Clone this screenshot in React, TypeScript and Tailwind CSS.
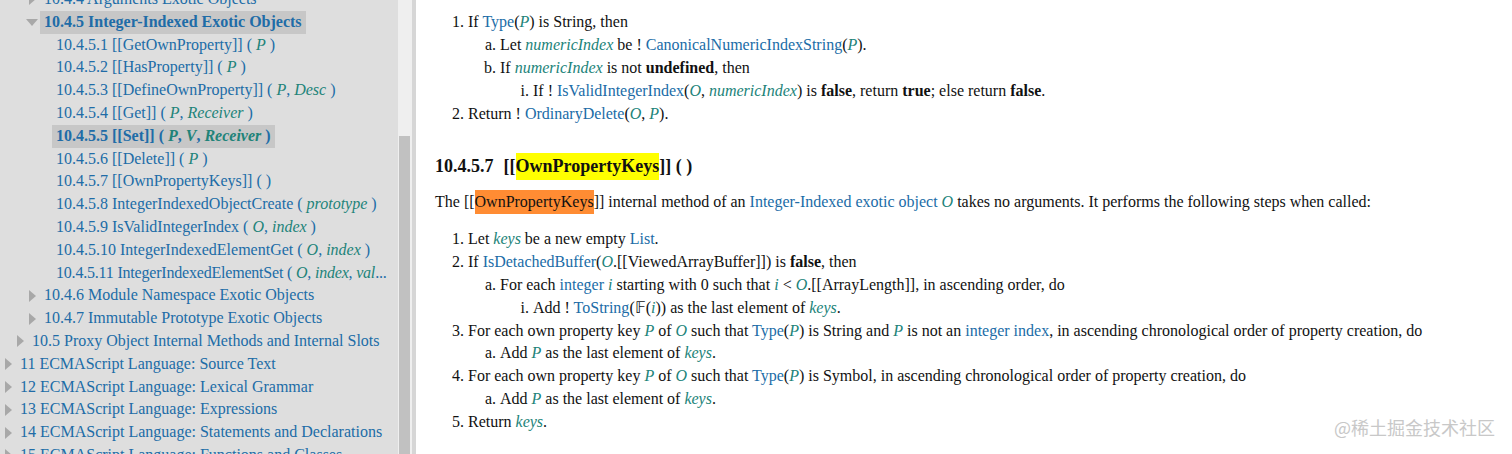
import React from "react";

const SERIF = "font-['Liberation_Serif',serif]";

function L({ children }: { children: React.ReactNode }) {
  return <span className="text-[#206ca7]">{children}</span>;
}
function V({ children }: { children: React.ReactNode }) {
  return <span className="italic text-[#218379]">{children}</span>;
}
function B({ children }: { children: React.ReactNode }) {
  return <span className="font-bold">{children}</span>;
}

function Tri({ open }: { open?: boolean }) {
  return (
    <svg width="12" height="12" viewBox="0 0 12 12" className="shrink-0">
      {open ? <polygon points="0,3 12,3 6,10" fill="#a8a8a8" /> : <polygon points="3,0 10,6 3,12" fill="#a8a8a8" />}
    </svg>
  );
}

type TocRow = {
  indent: number;
  tri?: "open" | "closed";
  content: React.ReactNode;
  active?: boolean;
  bold?: boolean;
  tight?: boolean;
};

const toc: TocRow[] = [
  { indent: 26, tri: "closed", content: <>10.4.4 Arguments Exotic Objects</> },
  { indent: 26, tri: "open", bold: true, active: true, content: <>10.4.5 Integer-Indexed Exotic Objects</> },
  { indent: 56, content: <>10.4.5.1 [[GetOwnProperty]] ( <V>P</V> )</> },
  { indent: 56, content: <>10.4.5.2 [[HasProperty]] ( <V>P</V> )</> },
  { indent: 56, content: <>10.4.5.3 [[DefineOwnProperty]] ( <V>P</V>, <V>Desc</V> )</> },
  { indent: 56, content: <>10.4.5.4 [[Get]] ( <V>P</V>, <V>Receiver</V> )</> },
  { indent: 56, bold: true, active: true, content: <>10.4.5.5 [[Set]] ( <V>P</V>, <V>V</V>, <V>Receiver</V> )</> },
  { indent: 56, content: <>10.4.5.6 [[Delete]] ( <V>P</V> )</> },
  { indent: 56, content: <>10.4.5.7 [[OwnPropertyKeys]] ( )</> },
  { indent: 56, content: <>10.4.5.8 IntegerIndexedObjectCreate ( <V>prototype</V> )</> },
  { indent: 56, content: <>10.4.5.9 IsValidIntegerIndex ( <V>O</V>, <V>index</V> )</> },
  { indent: 56, content: <>10.4.5.10 IntegerIndexedElementGet ( <V>O</V>, <V>index</V> )</> },
  { indent: 56, tight: true, content: <>10.4.5.11 IntegerIndexedElementSet ( <V>O</V>, <V>index</V>, <V>val</V>...</> },
  { indent: 26, tri: "closed", content: <>10.4.6 Module Namespace Exotic Objects</> },
  { indent: 26, tri: "closed", content: <>10.4.7 Immutable Prototype Exotic Objects</> },
  { indent: 14, tri: "closed", content: <>10.5 Proxy Object Internal Methods and Internal Slots</> },
  { indent: 2, tri: "closed", content: <>11 ECMAScript Language: Source Text</> },
  { indent: 2, tri: "closed", content: <>12 ECMAScript Language: Lexical Grammar</> },
  { indent: 2, tri: "closed", content: <>13 ECMAScript Language: Expressions</> },
  { indent: 2, tri: "closed", content: <>14 ECMAScript Language: Statements and Declarations</> },
  { indent: 2, tri: "closed", content: <>15 ECMAScript Language: Functions and Classes</> },
];

function Sidebar() {
  return (
    <div className="w-[398px] shrink-0 overflow-hidden bg-[#dedede]">
      <div className={`-mt-[12px] ${SERIF} text-[16px] leading-[22.8px] text-[#206ca7]`}>
        {toc.map((r, i) => (
          <div
            key={i}
            className={`flex h-[22.8px] items-center whitespace-nowrap ${r.tight ? "tracking-[-0.2px]" : ""}`}
            style={{ paddingLeft: r.indent }}
          >
            {r.tri && (
              <span className="mr-[6px] flex w-[12px]">
                <Tri open={r.tri === "open"} />
              </span>
            )}
            <span className={`${r.active ? "bg-[#c7c7c7] px-[4px] -ml-[4px]" : ""} ${r.bold ? "font-bold" : ""}`}>
              {r.content}
            </span>
          </div>
        ))}
      </div>
    </div>
  );
}

function Scrollbar() {
  return (
    <div className="flex shrink-0">
      <div className="flex w-[14px] flex-col bg-[#efefef] pl-[1px]">
        <div className="h-[136px]" />
        <div className="w-[11px] flex-1 bg-[#c1c1c1]" />
      </div>
      <div className="w-[4px] bg-[#d6d6d6]" />
    </div>
  );
}

type Step = { level: 1 | 2 | 3; m: string; content: React.ReactNode };

const markerW: Record<number, string> = { 1: "w-[33px]", 2: "w-[65px]", 3: "w-[98px]" };

function Steps({ steps }: { steps: Step[] }) {
  return (
    <div>
      {steps.map((s, i) => (
        <div key={i} className="flex h-[22.8px] items-center whitespace-nowrap">
          <span className={`${markerW[s.level]} shrink-0 pr-[4px] text-right`}>{s.m}</span>
          <span>{s.content}</span>
        </div>
      ))}
    </div>
  );
}

const top: Step[] = [
  { level: 1, m: "1.", content: <>If <L>Type</L>(<V>P</V>) is String, then</> },
  { level: 2, m: "a.", content: <>Let <V>numericIndex</V> be ! <L>CanonicalNumericIndexString</L>(<V>P</V>).</> },
  { level: 2, m: "b.", content: <>If <V>numericIndex</V> is not <B>undefined</B>, then</> },
  { level: 3, m: "i.", content: <>If ! <L>IsValidIntegerIndex</L>(<V>O</V>, <V>numericIndex</V>) is <B>false</B>, return <B>true</B>; else return <B>false</B>.</> },
  { level: 1, m: "2.", content: <>Return ! <L>OrdinaryDelete</L>(<V>O</V>, <V>P</V>).</> },
];

const bottom: Step[] = [
  { level: 1, m: "1.", content: <>Let <V>keys</V> be a new empty <L>List</L>.</> },
  { level: 1, m: "2.", content: <>If <L>IsDetachedBuffer</L>(<V>O</V>.[[ViewedArrayBuffer]]) is <B>false</B>, then</> },
  { level: 2, m: "a.", content: <>For each <L>integer</L> <V>i</V> starting with 0 such that <V>i</V> &lt; <V>O</V>.[[ArrayLength]], in ascending order, do</> },
  { level: 3, m: "i.", content: <>Add ! <L>ToString</L>(𝔽(<V>i</V>)) as the last element of <V>keys</V>.</> },
  { level: 1, m: "3.", content: <>For each own property key <V>P</V> of <V>O</V> such that <L>Type</L>(<V>P</V>) is String and <V>P</V> is not an <L>integer index</L>, in ascending chronological order of property creation, do</> },
  { level: 2, m: "a.", content: <>Add <V>P</V> as the last element of <V>keys</V>.</> },
  { level: 1, m: "4.", content: <>For each own property key <V>P</V> of <V>O</V> such that <L>Type</L>(<V>P</V>) is Symbol, in ascending chronological order of property creation, do</> },
  { level: 2, m: "a.", content: <>Add <V>P</V> as the last element of <V>keys</V>.</> },
  { level: 1, m: "5.", content: <>Return <V>keys</V>.</> },
];

function Content() {
  return (
    <div className={`relative flex-1 overflow-hidden bg-white pl-[19px] pt-[11px] ${SERIF} text-[16px] text-[#111]`}>
      <Steps steps={top} />
      <h1 className="mt-[30px] flex h-[24px] items-center whitespace-nowrap text-[18px] font-bold">
        <span>10.4.5.7</span>
        <span className="ml-[10px]">[[</span>
        <span className="bg-[#ffff00]">OwnPropertyKeys</span>
        <span>]] ( )</span>
      </h1>
      <p className="mt-[12px] flex h-[22px] items-center whitespace-nowrap">
        The [[<span className="bg-[#ff8c33]">OwnPropertyKeys</span>]]&nbsp;internal method of an&nbsp;
        <L>Integer-Indexed exotic object</L>&nbsp;<V>O</V>&nbsp;takes no arguments. It performs the following steps when called:
      </p>
      <div className="mt-[15px]">
        <Steps steps={bottom} />
      </div>
      <div className="absolute bottom-[13px] right-[17px] font-['Noto_Sans_CJK_SC',sans-serif] text-[18px] text-[#c8c8c8]">
        @稀土掘金技术社区
      </div>
    </div>
  );
}

export default function App() {
  return (
    <div className="flex h-[454px] w-[1512px] overflow-hidden bg-white">
      <Sidebar />
      <Scrollbar />
      <Content />
    </div>
  );
}
